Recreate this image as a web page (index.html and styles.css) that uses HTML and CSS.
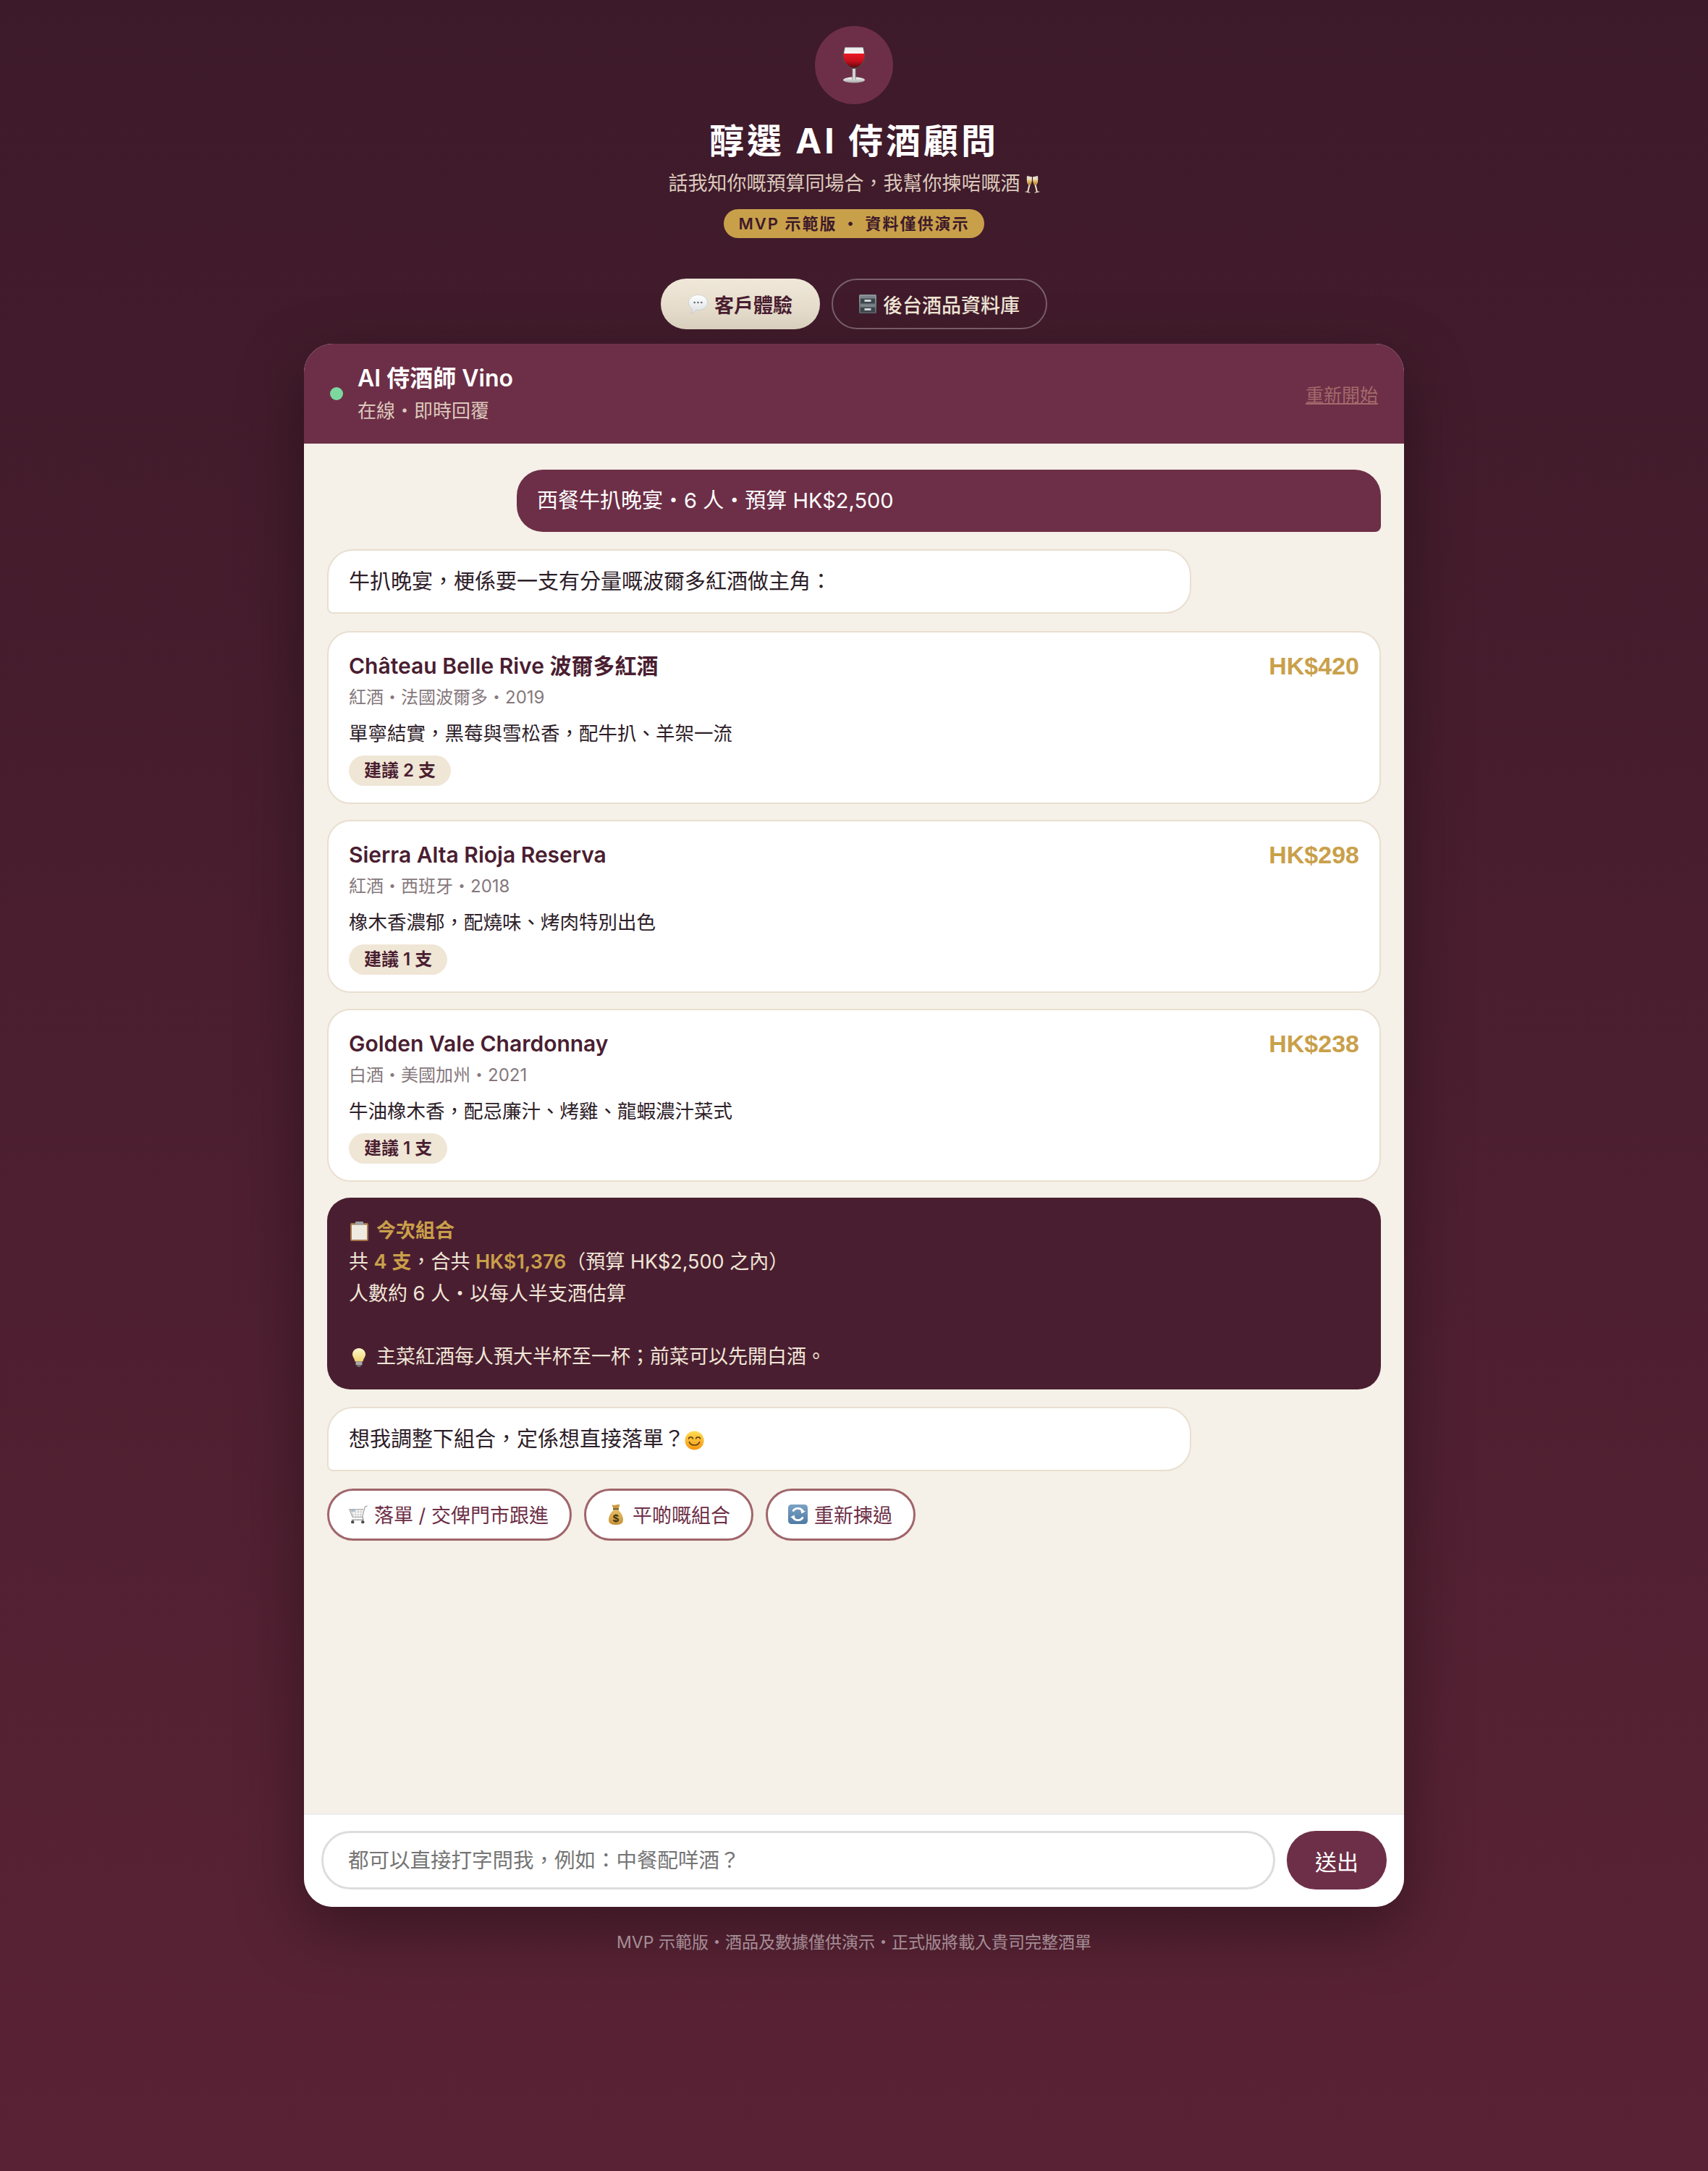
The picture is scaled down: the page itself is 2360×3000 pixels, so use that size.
FILE: index.html
```html
<!DOCTYPE html>
<html lang="zh-Hant">
<head>
  <meta charset="UTF-8">
  <title>醇選 AI 侍酒顧問</title>
  <link rel="stylesheet" href="styles.css">
</head>
<body>

  <svg class="defs" aria-hidden="true">
    <defs>
      <linearGradient id="g-wine" x1="0" y1="0" x2="0" y2="1"><stop offset="0" stop-color="#ec1a26"/><stop offset=".55" stop-color="#c40f1c"/><stop offset="1" stop-color="#5e0a10"/></linearGradient>
      <linearGradient id="g-glass" x1="0" y1="0" x2="0" y2="1"><stop offset="0" stop-color="#e9e9e9"/><stop offset="1" stop-color="#f7f7f7"/></linearGradient>
      <linearGradient id="g-stem" x1="0" y1="0" x2="1" y2="0"><stop offset="0" stop-color="#8d8d8d"/><stop offset=".5" stop-color="#f2f2f2"/><stop offset="1" stop-color="#8d8d8d"/></linearGradient>
      <linearGradient id="g-base" x1="0" y1="0" x2="0" y2="1"><stop offset="0" stop-color="#fafafa"/><stop offset="1" stop-color="#a3a3a3"/></linearGradient>
      <linearGradient id="g-gold" x1="0" y1="0" x2="0" y2="1"><stop offset="0" stop-color="#f6dc8c"/><stop offset="1" stop-color="#b27c16"/></linearGradient>
      <linearGradient id="g-smile" x1="0" y1="0" x2="0" y2="1"><stop offset="0" stop-color="#ffdd55"/><stop offset="1" stop-color="#f4960f"/></linearGradient>
      <linearGradient id="g-metal" x1="0" y1="0" x2="0" y2="1"><stop offset="0" stop-color="#8d979c"/><stop offset="1" stop-color="#5b656b"/></linearGradient>
      <linearGradient id="g-blue" x1="0" y1="0" x2="0" y2="1"><stop offset="0" stop-color="#7ba2c4"/><stop offset="1" stop-color="#4f7ba3"/></linearGradient>
      <linearGradient id="g-bulb" x1="0" y1="0" x2="0" y2="1"><stop offset="0" stop-color="#fff8d0"/><stop offset="1" stop-color="#f0d66f"/></linearGradient>
      <linearGradient id="g-bubble" x1="0" y1="0" x2="0" y2="1"><stop offset="0" stop-color="#fff"/><stop offset="1" stop-color="#dfe2e5"/></linearGradient>
      <linearGradient id="g-bag" x1="0" y1="0" x2="0" y2="1"><stop offset="0" stop-color="#e6bd62"/><stop offset="1" stop-color="#c6923a"/></linearGradient>

      <symbol id="i-wine" viewBox="0 0 32 50">
        <ellipse cx="16" cy="45.500" rx="15" ry="4" fill="url(#g-base)"/>
        <rect x="13.500" y="28" width="5" height="17" fill="url(#g-stem)"/>
        <path d="M3 0h26c2 5 3 9 3 13.500C32 23 25 30 16 30S0 23 0 13.500C0 9 1 5 3 0z" fill="#55434a"/>
        <path d="M3.500 .5h25l1.500 8.500H2z" fill="url(#g-glass)"/>
        <path d="M1.500 9h29c1.200 9.500-5.500 19.500-14.500 19.500S.3 18.500 1.500 9z" fill="url(#g-wine)"/>
      </symbol>
      <symbol id="i-flutes" viewBox="0 0 21 25">
        <path d="M3 1l7 1.500c0 4-.5 9-2.500 11.200L5.200 23l2.300.9-.2 .8-6.800-1.500.3-.8 2.500.2 2-9.200C2.500 10.800 2.500 5.500 3 1z" fill="#e6dfc9"/>
        <path d="M3.200 5.500l6.300 1.400c-.2 3-.9 5.500-2.200 6.800l-1.500-.3C3.900 12 3.300 9 3.200 5.500z" fill="url(#g-gold)"/>
        <path d="M18 1l-7 1.500c0 4 .5 9 2.500 11.200L15.800 23l-2.300.9.200 .8 6.800-1.500-.3-.8-2.500.2-2-9.200C18.500 10.800 18.500 5.500 18 1z" fill="#e6dfc9"/>
        <path d="M17.800 5.500l-6.300 1.400c.2 3 .9 5.500 2.200 6.800l1.500-.3C17.100 12 17.700 9 17.800 5.500z" fill="url(#g-gold)"/>
      </symbol>
      <symbol id="i-bubble" viewBox="0 0 28 28">
        <path d="M14 .5c7.500 0 13.500 4.800 13.500 11S21.500 22.500 14 22.500c-1 0-2-.1-3-.3-1.800 2.600-4.500 4.800-7.500 5.300 1.500-2 2.300-4.200 2.200-6.500C2.800 19 .5 15.500.5 11.500.5 5.300 6.500 .5 14 .5z" fill="url(#g-bubble)" stroke="#bfc4c9" stroke-width=".6"/>
        <circle cx="9" cy="11.500" r="1.300" fill="#5f646b"/><circle cx="14" cy="11.500" r="1.300" fill="#5f646b"/><circle cx="19" cy="11.500" r="1.300" fill="#5f646b"/>
      </symbol>
      <symbol id="i-cabinet" viewBox="0 0 24 26">
        <rect width="24" height="26" rx="1.500" fill="url(#g-metal)"/>
        <rect x="2" y="2" width="20" height="10.500" fill="#3f474c"/><rect x="2" y="14" width="20" height="10.500" fill="#3f474c"/>
        <rect x="2" y="2" width="20" height="3.500" fill="#7a848a"/><rect x="2" y="14" width="20" height="3.500" fill="#7a848a"/>
        <rect x="7.500" y="7" width="9" height="3" fill="#d5d9db"/><rect x="7.500" y="19" width="9" height="3" fill="#d5d9db"/>
      </symbol>
      <symbol id="i-clip" viewBox="0 0 25 27">
        <rect y="2" width="25" height="25" rx="2" fill="#a5754a"/>
        <rect x="2" y="4.500" width="21" height="20.500" fill="#efebe1"/>
        <rect x="7" y="0" width="11" height="4.500" rx="1" fill="#9da3a8"/>
      </symbol>
      <symbol id="i-bulb" viewBox="0 0 18 26">
        <path d="M9 0c5 0 9 3.800 9 8.500 0 3.500-3 6-3.500 10h-11C3 14.500 0 12 0 8.500 0 3.800 4 0 9 0z" fill="url(#g-bulb)"/>
        <rect x="4.500" y="18.500" width="9" height="5" rx="1.200" fill="#a8a8a8"/>
        <rect x="6.500" y="23" width="5" height="3" rx="1.500" fill="#6e6e6e"/>
      </symbol>
      <symbol id="i-smile" viewBox="0 0 32 32">
        <circle cx="16" cy="16" r="15.500" fill="url(#g-smile)"/>
        <path d="M6.500 13c1-3.500 6-3.500 7 0M18.500 13c1-3.500 6-3.500 7 0" fill="none" stroke="#5b3a12" stroke-width="1.800" stroke-linecap="round"/>
        <path d="M7.500 18.500c3 7 14 7 17 0" fill="none" stroke="#5b3a12" stroke-width="1.800" stroke-linecap="round"/>
      </symbol>
      <symbol id="i-cart" viewBox="0 0 28 26">
        <path d="M27.500 .5l-3.500 1.500-3.500 14.500H6.500L2 5.500h20" fill="none" stroke="#a3a3a3" stroke-width="1.300"/>
        <path d="M3 9h19.500M4.500 13h17M5.500 5.500l2 11M10 5.500l1 11M14.500 5.500v11M19 5.500l-1 11" fill="none" stroke="#c4c4c4" stroke-width=".9"/>
        <path d="M4 5.500h6v3H4z" fill="#8fa9c2" opacity=".7"/>
        <path d="M5 20.500h17" stroke="#8f8f8f" stroke-width="1.300"/>
        <path d="M20.500 16.500l1.500 4" stroke="#8f8f8f" stroke-width="1.300"/>
        <circle cx="6.500" cy="23.500" r="2.300" fill="#4d4d4d"/><circle cx="21" cy="23.500" r="2.300" fill="#4d4d4d"/>
      </symbol>
      <symbol id="i-money" viewBox="0 0 20 28">
        <path d="M4.500 0c2 1.200 3.500 1.200 5.500.6 2-.6 3.500-.6 5.500-.6L13.500 6h-7z" fill="#c99a3f"/>
        <rect x="6" y="5.500" width="8" height="2" fill="#6b4e22"/>
        <path d="M7 7.500h6C17 11 20 16 20 21c0 5.500-4 7-10 7S0 26.500 0 21c0-5 3-10 7-13.500z" fill="url(#g-bag)"/>
        <text class="money-sign" x="10" y="24" text-anchor="middle">$</text>
      </symbol>
      <symbol id="i-refresh" viewBox="0 0 27 27">
        <rect width="27" height="27" rx="4.500" fill="url(#g-blue)"/>
        <path d="M21 10.500A8 8 0 0 0 6.500 9.500" fill="none" stroke="#fff" stroke-width="2.800"/>
        <path d="M6 16.500A8 8 0 0 0 20.500 17.500" fill="none" stroke="#fff" stroke-width="2.800"/>
        <path d="M24 9.500l-5.500 3-1.500-5.500zM3 17.500l5.500-3 1.500 5.500z" fill="#fff"/>
      </symbol>
    </defs>
  </svg>

  <header class="hero">
    <div class="avatar"><svg class="ico-wine"><use href="#i-wine"/></svg></div>
    <h1>醇選 AI 侍酒顧問</h1>
    <p class="tagline">話我知你嘅預算同場合，我幫你揀啱嘅酒 <svg class="ico-flutes"><use href="#i-flutes"/></svg></p>
    <span class="badge">MVP 示範版 ・ 資料僅供演示</span>
    <nav class="tabs">
      <button class="tab active"><svg class="ico-tab"><use href="#i-bubble"/></svg>客戶體驗</button>
      <button class="tab"><svg class="ico-cab"><use href="#i-cabinet"/></svg>後台酒品資料庫</button>
    </nav>
  </header>

  <main class="chat">
    <div class="chat-head">
      <div class="agent">
        <span class="dot"></span>
        <div>
          <div class="agent-name">AI 侍酒師 Vino</div>
          <div class="agent-status">在線・即時回覆</div>
        </div>
      </div>
      <a class="restart">重新開始</a>
    </div>

    <div class="messages">
      <div class="msg user">西餐牛扒晚宴・6 人・預算 HK$2,500</div>
      <div class="msg bot">牛扒晚宴，梗係要一支有分量嘅波爾多紅酒做主角：</div>

      <article class="wine">
        <div class="wine-top"><span class="wine-name">Château Belle Rive 波爾多紅酒</span><span class="wine-price">HK$420</span></div>
        <div class="wine-meta">紅酒・法國波爾多・2019</div>
        <div class="wine-desc">單寧結實，黑莓與雪松香，配牛扒、羊架一流</div>
        <span class="qty">建議 2 支</span>
      </article>
      <article class="wine">
        <div class="wine-top"><span class="wine-name">Sierra Alta Rioja Reserva</span><span class="wine-price">HK$298</span></div>
        <div class="wine-meta">紅酒・西班牙・2018</div>
        <div class="wine-desc">橡木香濃郁，配燒味、烤肉特別出色</div>
        <span class="qty">建議 1 支</span>
      </article>
      <article class="wine">
        <div class="wine-top"><span class="wine-name">Golden Vale Chardonnay</span><span class="wine-price">HK$238</span></div>
        <div class="wine-meta">白酒・美國加州・2021</div>
        <div class="wine-desc">牛油橡木香，配忌廉汁、烤雞、龍蝦濃汁菜式</div>
        <span class="qty">建議 1 支</span>
      </article>

      <section class="summary">
        <div><svg class="ico-clip"><use href="#i-clip"/></svg><b>今次組合</b></div>
        <div>共 <b>4 支</b>，合共 <b>HK$1,376</b>（預算 HK$2,500 之內）</div>
        <div>人數約 6 人・以每人半支酒估算</div>
        <div>&nbsp;</div>
        <div><svg class="ico-bulb"><use href="#i-bulb"/></svg>主菜紅酒每人預大半杯至一杯；前菜可以先開白酒。</div>
      </section>

      <div class="msg bot">想我調整下組合，定係想直接落單？<svg class="ico-smile"><use href="#i-smile"/></svg></div>

      <div class="chips">
        <button class="chip"><svg class="ico-cart"><use href="#i-cart"/></svg>落單 / 交俾門市跟進</button>
        <button class="chip"><svg class="ico-money"><use href="#i-money"/></svg>平啲嘅組合</button>
        <button class="chip"><svg class="ico-refresh"><use href="#i-refresh"/></svg>重新揀過</button>
      </div>
    </div>

    <form class="composer">
      <input class="composer-input" type="text" placeholder="都可以直接打字問我，例如：中餐配咩酒？">
      <button class="send" type="button">送出</button>
    </form>
  </main>

  <footer class="foot">MVP 示範版・酒品及數據僅供演示・正式版將載入貴司完整酒單</footer>

</body>
</html>
```

FILE: styles.css
```css
* {
  margin: 0;
  padding: 0;
  box-sizing: border-box;
}

html, body {
  min-height: 3000px;
}

body {
  font-family: Inter, "Noto Sans CJK TC", sans-serif;
  background: linear-gradient(180deg, #3d1a2a 0%, #5a2335 100%);
  color: #2d2028;
  display: flex;
  flex-direction: column;
  align-items: center;
  padding-top: 36px;
}

button, input {
  font-family: inherit;
}

svg {
  flex: none;
}

.defs {
  position: absolute;
  width: 0;
  height: 0;
}

.money-sign {
  font-family: "Liberation Sans", sans-serif;
  font-size: 15px;
  font-weight: 700;
  fill: #3f2c10;
}

/* cabecera */
.hero {
  display: flex;
  flex-direction: column;
  align-items: center;
}

.avatar {
  width: 108px;
  height: 108px;
  border-radius: 50%;
  background: #6d2f47;
  display: flex;
  align-items: center;
  justify-content: center;
}

.ico-wine {
  width: 32px;
  height: 50px;
}

h1 {
  margin-top: 15px;
  font-size: 48px;
  line-height: 72px;
  font-weight: 700;
  letter-spacing: 4px;
  color: #fff;
}

.tagline {
  margin-top: 3px;
  font-size: 27px;
  line-height: 40px;
  color: #dcc9bc;
  display: flex;
  align-items: center;
  gap: 6px;
}

.ico-flutes {
  width: 21px;
  height: 25px;
}

.badge {
  margin-top: 15px;
  height: 40px;
  line-height: 40px;
  padding: 0 20px;
  border-radius: 20px;
  background: #c9a04a;
  color: #3d1a2a;
  font-size: 22px;
  font-weight: 600;
  letter-spacing: 2px;
}

.tabs {
  margin-top: 56px;
  display: flex;
  gap: 16px;
}

.tab {
  height: 70px;
  padding: 0 36px;
  border-radius: 35px;
  border: 2px solid rgba(255, 255, 255, 0.3);
  background: transparent;
  color: #f0e6d6;
  font-size: 27px;
  font-weight: 500;
  display: flex;
  align-items: center;
  gap: 9px;
}

.tab.active {
  border-color: transparent;
  background: linear-gradient(180deg, #efe7d8 0%, #e2d8c6 100%) border-box;
  color: #4a1e31;
  font-weight: 600;
}

.ico-tab {
  width: 27px;
  height: 27px;
}

.ico-cab {
  width: 24px;
  height: 26px;
}

/* tarjeta */
.chat {
  margin-top: 20px;
  width: 1520px;
  height: 2160px;
  border-radius: 40px;
  overflow: hidden;
  display: flex;
  flex-direction: column;
  background: #f5f0e8;
  box-shadow: 0 30px 90px rgba(0, 0, 0, 0.35);
}

.chat-head {
  height: 138px;
  padding: 0 36px;
  background: #6d2f47;
  display: flex;
  align-items: center;
  justify-content: space-between;
}

.agent {
  display: flex;
  align-items: center;
  gap: 20px;
}

.dot {
  width: 18px;
  height: 18px;
  border-radius: 50%;
  background: #7dd8a0;
}

.agent-name {
  font-size: 32px;
  line-height: 44px;
  font-weight: 600;
  color: #fff;
}

.agent-status {
  margin-top: 4px;
  font-size: 26px;
  line-height: 38px;
  color: #dcc9bc;
}

.restart {
  font-size: 25px;
  color: #a36a6c;
  text-decoration: underline;
}

.messages {
  flex: 1;
  padding: 36px 32px;
  display: flex;
  flex-direction: column;
  gap: 22px;
}

.msg {
  width: 82%;
  margin-bottom: 2px;
  font-size: 29px;
  line-height: 46px;
  padding: 20px 28px;
}

.msg.user {
  align-self: flex-end;
  background: #6d2f47;
  color: #fff;
  border-radius: 36px 36px 8px 36px;
}

.msg.bot {
  line-height: 45px;
  background: #fff;
  border: 2px solid #e9dfd0;
  border-radius: 36px 36px 36px 8px;
  color: #2d2028;
}

.ico-smile {
  width: 27px;
  height: 27px;
  vertical-align: -5px;
}

.wine {
  background: #fff;
  border: 2px solid #e9dfd0;
  border-radius: 32px;
  padding: 24px 28px;
  height: 239px;
}

.wine-top {
  display: flex;
  justify-content: space-between;
  align-items: center;
}

.wine-name {
  font-size: 30px;
  line-height: 44px;
  font-weight: 600;
  color: #4a1e31;
}

.wine-price {
  font-family: "Liberation Sans", "Noto Sans CJK TC", sans-serif;
  font-size: 34px;
  font-weight: 700;
  color: #c9a04a;
}

.wine-meta {
  margin-top: 4px;
  font-size: 24px;
  line-height: 36px;
  color: #85787c;
}

.wine-desc {
  margin-top: 10px;
  font-size: 26.5px;
  line-height: 42px;
  color: #2d2028;
}

.qty {
  display: inline-block;
  margin-top: 10px;
  height: 42px;
  line-height: 42px;
  padding: 0 21px;
  border-radius: 21px;
  background: #f0e6d6;
  color: #4a1e31;
  font-size: 24px;
  font-weight: 600;
}

.summary {
  margin-bottom: 2px;
  background: #4a1e31;
  border-radius: 32px;
  padding: 23.5px 30px;
  font-size: 27px;
  line-height: 43.5px;
  color: #f0e6d6;
}

.summary b {
  color: #c9a04a;
  font-weight: 600;
}

.ico-clip {
  width: 25px;
  height: 27px;
  margin: 0 11px 0 2px;
  vertical-align: -5px;
}

.ico-bulb {
  width: 18px;
  height: 26px;
  margin: 0 15px 0 5px;
  vertical-align: -5px;
}

.chips {
  display: flex;
  gap: 17px;
}

.chip {
  height: 72px;
  padding: 0 29px 0 26px;
  border-radius: 36px;
  border: 3px solid #a0656a;
  background: #fff;
  color: #6d2f47;
  font-size: 27px;
  display: flex;
  align-items: center;
  gap: 9px;
}

.ico-cart {
  width: 27px;
  height: 26px;
}

.ico-money {
  width: 20px;
  height: 28px;
  margin: 0 4px 0 5px;
}

.ico-refresh {
  width: 27px;
  height: 27px;
  margin-left: 2px;
}

/* caja de texto */
.composer {
  height: 129px;
  padding: 22px 24px;
  background: #fff;
  border-top: 2px solid #eee;
  display: flex;
  gap: 16px;
}

.composer-input {
  flex: 1;
  height: 81px;
  padding: 0 34px;
  border-radius: 40px;
  border: 3px solid #ddd;
  font-size: 28.5px;
  outline: none;
}

.composer-input::placeholder {
  color: #757575;
}

.send {
  width: 138px;
  height: 81px;
  border: none;
  border-radius: 40px;
  background: #6d2f47;
  color: #fff;
  font-size: 30px;
  font-weight: 400;
}

.foot {
  margin-top: 32px;
  font-size: 23px;
  line-height: 34px;
  color: rgba(255, 255, 255, 0.5);
}
```
